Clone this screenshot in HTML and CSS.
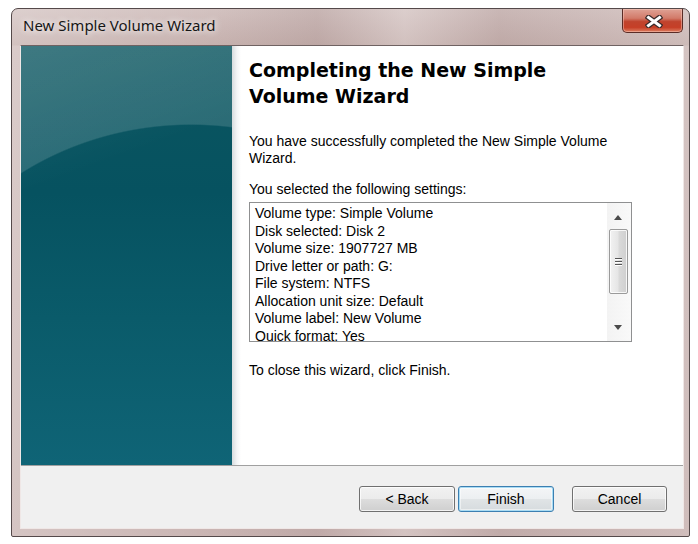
FILE: index.html
```html
<!DOCTYPE html>
<html lang="en">

<head>
    <meta charset="UTF-8">
    <meta name="viewport" content="width=device-width, initial-scale=1.0">
    <title>New Simple Volume Wizard</title>
    <link rel="stylesheet" href="styles.css">
</head>

<body>
    <div class="window">
        <!-- Title bar -->
        <div class="titlebar">
            <span class="title">New Simple Volume Wizard</span>
            <button class="close" title="Close">
                <svg width="18" height="13" viewBox="0 0 18 13">
                    <path d="M3.5 2.5 L14.5 10.5 M14.5 2.5 L3.5 10.5" stroke="#3a2a2a" stroke-width="5.4" stroke-linecap="square" fill="none" />
                    <path d="M3.5 2.5 L14.5 10.5 M14.5 2.5 L3.5 10.5" stroke="#ffffff" stroke-width="3" stroke-linecap="square" fill="none" />
                </svg>
            </button>
        </div>

        <div class="client">
            <div class="wizard-body">
                <div class="side"></div>

                <div class="content">
                    <h1>Completing the New Simple Volume Wizard</h1>
                    <p class="intro">You have successfully completed the New Simple Volume Wizard.</p>
                    <p class="label">You selected the following settings:</p>

                    <div class="listbox">
                        <div class="list-text">
                            <div>Volume type: Simple Volume</div>
                            <div>Disk selected: Disk 2</div>
                            <div>Volume size: 1907727 MB</div>
                            <div>Drive letter or path: G:</div>
                            <div>File system: NTFS</div>
                            <div>Allocation unit size: Default</div>
                            <div>Volume label: New Volume</div>
                            <div>Quick format: Yes</div>
                        </div>
                        <div class="scrollbar">
                            <div class="sb-btn sb-up">
                                <svg width="8" height="5" viewBox="0 0 8 5"><path d="M4 0 L8 5 L0 5 Z" fill="#4a4a4a" /></svg>
                            </div>
                            <div class="sb-thumb">
                                <span class="grip"></span>
                                <span class="grip"></span>
                                <span class="grip"></span>
                            </div>
                            <div class="sb-track"></div>
                            <div class="sb-btn sb-down">
                                <svg width="8" height="5" viewBox="0 0 8 5"><path d="M0 0 L8 0 L4 5 Z" fill="#4a4a4a" /></svg>
                            </div>
                        </div>
                    </div>

                    <p class="note">To close this wizard, click Finish.</p>
                </div>
            </div>

            <div class="footer">
                <button class="btn">&lt; Back</button>
                <button class="btn btn-default">Finish</button>
                <button class="btn btn-cancel">Cancel</button>
            </div>
        </div>
    </div>
</body>

</html>
```

FILE: styles.css
```css
body {
    margin: 0;
    padding: 8px 0 0 11px;
    background-color: #ffffff;
    font-family: 'Liberation Sans', Arial, sans-serif;
}

.window {
    width: 679px;
    height: 529px;
    box-sizing: border-box;
    display: flex;
    flex-direction: column;
    padding: 0 5px 7px 8px;
    border: 1px solid #54494a;
    border-radius: 7px 7px 2px 2px;
    background:
        linear-gradient(to right, rgba(255, 255, 255, 0.22) 0, rgba(255, 255, 255, 0) 30%, rgba(120, 90, 90, 0.12) 45%, rgba(255, 255, 255, 0.2) 58%, rgba(120, 90, 90, 0.1) 72%, rgba(255, 255, 255, 0.12) 100%),
        linear-gradient(to bottom, #d3c2c0 0, #c6b1ae 36px, #cfbcba 37px, #c9b4b2 100%);
}

/* title bar */
.titlebar {
    height: 36px;
    display: flex;
    align-items: flex-start;
    justify-content: space-between;
}

.title {
    padding: 6px 0 0 3px;
    font-family: 'Noto Sans', sans-serif;
    font-size: 15px;
    line-height: 20px;
    color: #161616;
    text-shadow: 0 0 6px rgba(255, 255, 255, 0.9), 0 0 10px rgba(255, 255, 255, 0.6);
}

.close {
    width: 61px;
    height: 24px;
    margin-right: 1px;
    padding: 0;
    display: flex;
    align-items: center;
    justify-content: center;
    border: 1px solid #5a2c26;
    border-top: none;
    border-radius: 0 0 5px 5px;
    background: linear-gradient(to bottom, #dfa295 0, #d27a69 40%, #c0432d 55%, #c63f27 80%, #dd7f62 100%);
    box-shadow: inset 0 0 0 1px rgba(255, 210, 200, 0.45);
    cursor: pointer;
}

.close svg {
    margin-left: 3px;
    margin-top: 1px;
}

/* client area */
.client {
    flex: 1;
    display: flex;
    flex-direction: column;
    border: 1px solid #efe7e6;
    border-top-color: #6f6262;
    background-color: #ffffff;
}

.wizard-body {
    height: 419px;
    display: flex;
}

/* teal banner; the darker part is a wide ellipse rising to the right */
.side {
    width: 211px;
    background:
        radial-gradient(ellipse 300px 275px at 170px 353px, rgba(255, 255, 255, 0) 99.5%, rgba(255, 255, 255, 0.14) 100%),
        linear-gradient(160deg, rgba(255, 255, 255, 0.08) 0, rgba(255, 255, 255, 0) 30%),
        linear-gradient(to bottom, #0b5660 0, #065260 35%, #0a5b6a 65%, #0f6476 100%);
}

.content {
    flex: 1;
    padding: 11px 51px 0 17px;
    background: linear-gradient(to right, #d7dcde 0, #f4f5f6 5px, #ffffff 9px);
    color: #000000;
    font-size: 14px;
}

.content h1 {
    margin: 0;
    max-width: 345px;
    font-family: 'DejaVu Sans', Verdana, sans-serif;
    font-size: 19px;
    font-weight: bold;
    line-height: 26px;
}

.content p {
    margin: 0;
    line-height: 17px;
}

.intro {
    margin-top: 24px !important;
}

.label {
    margin-top: 14px !important;
}

.note {
    margin-top: 20px !important;
}

/* settings list */
.listbox {
    margin-top: 4px;
    height: 140px;
    box-sizing: border-box;
    display: flex;
    border: 1px solid #8f9091;
    background-color: #ffffff;
    overflow: hidden;
}

.list-text {
    flex: 1;
    padding: 2px 0 0 5px;
    line-height: 17.5px;
    overflow: hidden;
}

.scrollbar {
    width: 24px;
    display: flex;
    flex-direction: column;
    background: linear-gradient(to right, #f3f3f3, #f9f9f9);
}

.sb-btn {
    display: flex;
    align-items: center;
    justify-content: center;
    padding-right: 2px;
}

.sb-up {
    height: 26px;
    padding-top: 2px;
    box-sizing: border-box;
}

.sb-down {
    height: 27px;
}

.sb-thumb {
    height: 65px;
    margin: 0 3px 0 2px;
    box-sizing: border-box;
    display: flex;
    flex-direction: column;
    align-items: center;
    justify-content: center;
    gap: 2px;
    border: 1px solid #9a9a9a;
    border-radius: 2px;
    background: linear-gradient(to right, #f2f2f2 0, #e6e6e6 45%, #d9d9d9 55%, #cfcfcf 100%);
    box-shadow: inset 0 0 0 1px rgba(255, 255, 255, 0.8);
}

.grip {
    width: 7px;
    height: 1px;
    background-color: #555555;
    box-shadow: 0 1px 0 #ffffff;
}

.sb-track {
    flex: 1;
}

/* buttons */
.footer {
    flex: 1;
    display: flex;
    justify-content: flex-end;
    align-items: flex-start;
    padding: 20px 16px 0 0;
    border-top: 1px solid #a0a0a0;
    background-color: #f0f0f0;
}

.btn {
    width: 96px;
    height: 26px;
    padding: 0;
    font-family: 'Liberation Sans', Arial, sans-serif;
    font-size: 14px;
    color: #000000;
    border: 1px solid #707070;
    border-radius: 3px;
    background: linear-gradient(to bottom, #f2f2f2 0, #ebebeb 50%, #dddddd 51%, #cfcfcf 100%);
    box-shadow: inset 0 0 0 1px rgba(255, 255, 255, 0.75);
    cursor: pointer;
}

.btn-default {
    margin-left: 3px;
    border-color: #3c7fb1;
    background: linear-gradient(to bottom, #f4f6f7 0, #eceff1 50%, #e0e4e6 51%, #d6dbde 100%);
    box-shadow: inset 0 0 0 1px #a9dcf4, inset 0 0 0 2px rgba(255, 255, 255, 0.5);
}

.btn-cancel {
    width: 95px;
    margin-left: 18px;
}
```
